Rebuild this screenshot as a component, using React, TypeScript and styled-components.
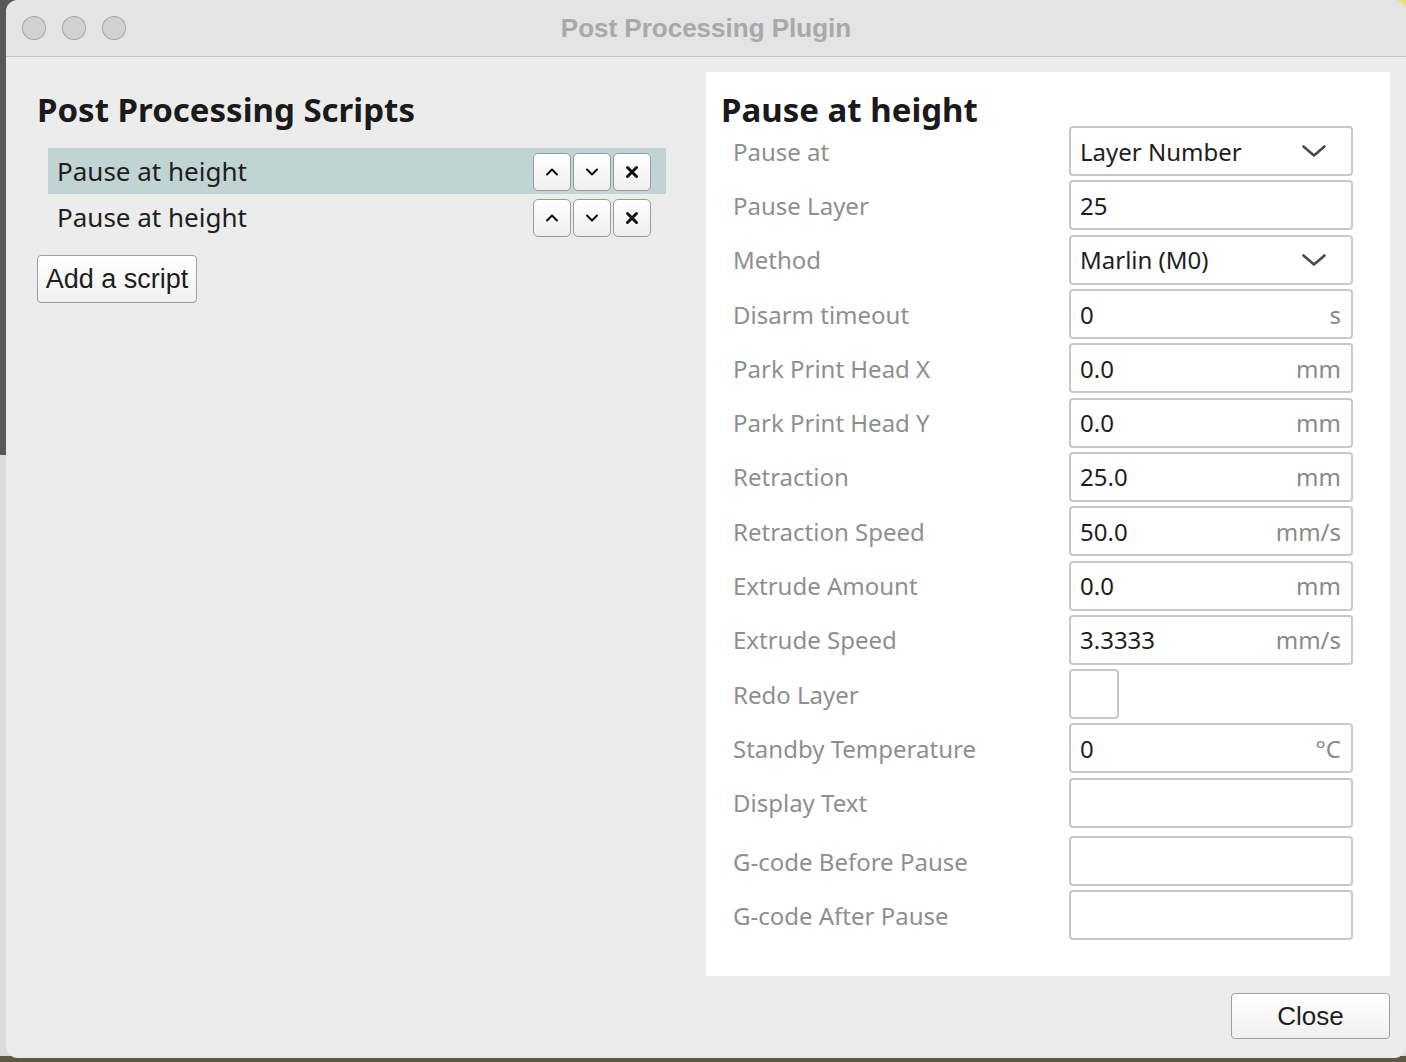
import React from 'react';
import styled, { createGlobalStyle } from 'styled-components';

const GlobalStyle = createGlobalStyle`
    html, body {
        margin: 0;
        padding: 0;
        width: 1406px;
        height: 1062px;
        overflow: hidden;
    }
    body {
        background: linear-gradient(
            to bottom,
            #585858 0,
            #585858 455px,
            #dcdcdc 455px,
            #dcdcdc 1056px,
            #5e5741 1056px
        );
        font-family: "Noto Sans", "Open Sans", sans-serif;
    }
`;

const Desktop = styled.div`
    width: 1406px;
    height: 1062px;
    display: flex;
    justify-content: flex-end;
    align-items: flex-start;
    background: radial-gradient(circle at 1406px 0, #e6e27a 0, #e6e27a 14px, transparent 15px);
`;

const Window = styled.div`
    width: 1400px;
    height: 1058px;
    background: #ececec;
    border-radius: 12px;
    overflow: hidden;
    display: flex;
    flex-direction: column;
`;

const TitleBar = styled.div`
    height: 56px;
    flex: 0 0 56px;
    background: #e3e4e3;
    border-bottom: 1px solid #c6c6c6;
    position: relative;
    display: flex;
    align-items: center;
    justify-content: center;
`;

const Lights = styled.div`
    position: absolute;
    left: 16px;
    top: 16px;
    display: flex;
    gap: 16px;
`;

const Light = styled.span`
    width: 24px;
    height: 24px;
    border-radius: 50%;
    background: #d1d1d1;
    box-shadow: inset 0 0 0 1px #a9a9a9;
`;

const Title = styled.div`
    font-family: "Liberation Sans", Arial, sans-serif;
    font-weight: bold;
    font-size: 26px;
    color: #a9a9a9;
`;

const Body = styled.div`
    flex: 1;
    display: flex;
    flex-direction: column;
    padding: 15px 16px 0 0;
`;

const Columns = styled.div`
    display: flex;
`;

const LeftColumn = styled.div`
    width: 700px;
    padding: 16px 40px 0 31px;
    box-sizing: border-box;
`;

const Heading = styled.h2`
    margin: 0;
    font-family: "Noto Sans", sans-serif;
    font-weight: bold;
    font-size: 33px;
    line-height: 44px;
    color: #1a1a1a;
`;

const ScriptList = styled.div`
    margin: 16px 0 0 11px;
    display: flex;
    flex-direction: column;
`;

const ScriptRow = styled.div<{ $selected?: boolean }>`
    height: 46px;
    display: flex;
    align-items: center;
    justify-content: space-between;
    padding: 0 15px 0 9px;
    background: ${(p) => (p.$selected ? '#c1d4d4' : 'transparent')};
`;

const ScriptName = styled.span`
    font-size: 26px;
    color: #1e1e1e;
`;

const RowButtons = styled.div`
    display: flex;
    gap: 2px;
    margin-top: 1px;
`;

const IconButton = styled.button`
    width: 38px;
    height: 38px;
    padding: 0;
    border: 1.5px solid #9b9b9b;
    border-radius: 5px;
    background: linear-gradient(#ffffff, #efefef);
    display: flex;
    align-items: center;
    justify-content: center;
`;

const AddButton = styled.button`
    margin-top: 15px;
    width: 160px;
    height: 48px;
    padding: 0;
    font-family: "Liberation Sans", Arial, sans-serif;
    font-size: 27px;
    color: #1e1e1e;
    border: 1.5px solid #9e9e9e;
    border-radius: 4px;
    background: linear-gradient(#ffffff, #f1f1f1);
`;

const SettingsPanel = styled.div`
    width: 684px;
    height: 904px;
    background: #ffffff;
    padding: 16px 37px 0 15px;
    box-sizing: border-box;
`;

const SettingsList = styled.div`
    margin-top: -8px;
    display: flex;
    flex-direction: column;
    padding-left: 12px;
`;

const SettingRow = styled.div<{ $extra?: boolean }>`
    height: 54.3px;
    flex: 0 0 54.3px;
    display: grid;
    grid-template-columns: 336px 1fr;
    align-items: center;
    margin-top: ${(p) => (p.$extra ? '4px' : '0')};
`;

const Label = styled.div`
    font-size: 24px;
    color: #8f8f8f;
`;

const Field = styled.div`
    width: 100%;
    height: 50px;
    box-sizing: border-box;
    border: 2px solid #c8c8c8;
    border-radius: 4px;
    display: flex;
    align-items: center;
    justify-content: space-between;
    padding: 0 10px 0 9px;
    font-size: 24px;
    color: #1e1e1e;
`;

const Unit = styled.span`
    color: #8a8a8a;
`;

const SelectArrow = styled.span`
    display: flex;
    margin-right: 14px;
`;

const Checkbox = styled.div`
    width: 50px;
    height: 50px;
    box-sizing: border-box;
    border: 2px solid #c8c8c8;
    border-radius: 4px;
`;

const Footer = styled.div`
    display: flex;
    justify-content: flex-end;
    padding-top: 17px;
`;

const CloseButton = styled.button`
    width: 159px;
    height: 46px;
    font-family: "Liberation Sans", Arial, sans-serif;
    font-size: 26px;
    color: #1e1e1e;
    border: 1.5px solid #a0a0a0;
    border-radius: 4px;
    background: linear-gradient(#ffffff, #f0f0f0);
`;

const Chevron = ({ up = false }: { up?: boolean }) => (
    <svg width="14" height="14" viewBox="0 0 14 14" fill="none">
        <path
            d={up ? 'M2 9.5 L7 4.5 L12 9.5' : 'M2 4.5 L7 9.5 L12 4.5'}
            stroke="#111"
            strokeWidth="2"
            strokeLinecap="round"
            strokeLinejoin="round"
        />
    </svg>
);

const Cross = () => (
    <svg width="14" height="14" viewBox="0 0 14 14">
        <path d="M2.5 2.5 L11.5 11.5 M11.5 2.5 L2.5 11.5" stroke="#111" strokeWidth="3" strokeLinecap="round" />
    </svg>
);

const DropChevron = () => (
    <svg width="26" height="16" viewBox="0 0 26 16" fill="none">
        <path d="M2.5 3.5 L13 12.5 L23.5 3.5" stroke="#4a4a4a" strokeWidth="2.6" strokeLinecap="round" strokeLinejoin="round" />
    </svg>
);

type Setting = {
    label: string;
    kind: 'select' | 'text' | 'check';
    value?: string;
    unit?: string;
    extra?: boolean;
};

const settings: Setting[] = [
    { label: 'Pause at', kind: 'select', value: 'Layer Number' },
    { label: 'Pause Layer', kind: 'text', value: '25' },
    { label: 'Method', kind: 'select', value: 'Marlin (M0)' },
    { label: 'Disarm timeout', kind: 'text', value: '0', unit: 's' },
    { label: 'Park Print Head X', kind: 'text', value: '0.0', unit: 'mm' },
    { label: 'Park Print Head Y', kind: 'text', value: '0.0', unit: 'mm' },
    { label: 'Retraction', kind: 'text', value: '25.0', unit: 'mm' },
    { label: 'Retraction Speed', kind: 'text', value: '50.0', unit: 'mm/s' },
    { label: 'Extrude Amount', kind: 'text', value: '0.0', unit: 'mm' },
    { label: 'Extrude Speed', kind: 'text', value: '3.3333', unit: 'mm/s' },
    { label: 'Redo Layer', kind: 'check' },
    { label: 'Standby Temperature', kind: 'text', value: '0', unit: '°C' },
    { label: 'Display Text', kind: 'text', value: '' },
    { label: 'G-code Before Pause', kind: 'text', value: '', extra: true },
    { label: 'G-code After Pause', kind: 'text', value: '' },
];

const scripts = ['Pause at height', 'Pause at height'];

const App = () => (
    <>
        <GlobalStyle />
        <Desktop>
            <Window>
                <TitleBar>
                    <Lights>
                        <Light />
                        <Light />
                        <Light />
                    </Lights>
                    <Title>Post Processing Plugin</Title>
                </TitleBar>
                <Body>
                    <Columns>
                        <LeftColumn>
                            <Heading>Post Processing Scripts</Heading>
                            <ScriptList>
                                {scripts.map((name, i) => (
                                    <ScriptRow key={i} $selected={i === 0}>
                                        <ScriptName>{name}</ScriptName>
                                        <RowButtons>
                                            <IconButton><Chevron up /></IconButton>
                                            <IconButton><Chevron /></IconButton>
                                            <IconButton><Cross /></IconButton>
                                        </RowButtons>
                                    </ScriptRow>
                                ))}
                            </ScriptList>
                            <AddButton>Add a script</AddButton>
                        </LeftColumn>
                        <SettingsPanel>
                            <Heading>Pause at height</Heading>
                            <SettingsList>
                                {settings.map((s) => (
                                    <SettingRow key={s.label} $extra={s.extra}>
                                        <Label>{s.label}</Label>
                                        {s.kind === 'check' ? (
                                            <Checkbox />
                                        ) : (
                                            <Field>
                                                <span>{s.value}</span>
                                                {s.kind === 'select' && (
                                                    <SelectArrow><DropChevron /></SelectArrow>
                                                )}
                                                {s.unit && <Unit>{s.unit}</Unit>}
                                            </Field>
                                        )}
                                    </SettingRow>
                                ))}
                            </SettingsList>
                        </SettingsPanel>
                    </Columns>
                    <Footer>
                        <CloseButton>Close</CloseButton>
                    </Footer>
                </Body>
            </Window>
        </Desktop>
    </>
);

export default App;
